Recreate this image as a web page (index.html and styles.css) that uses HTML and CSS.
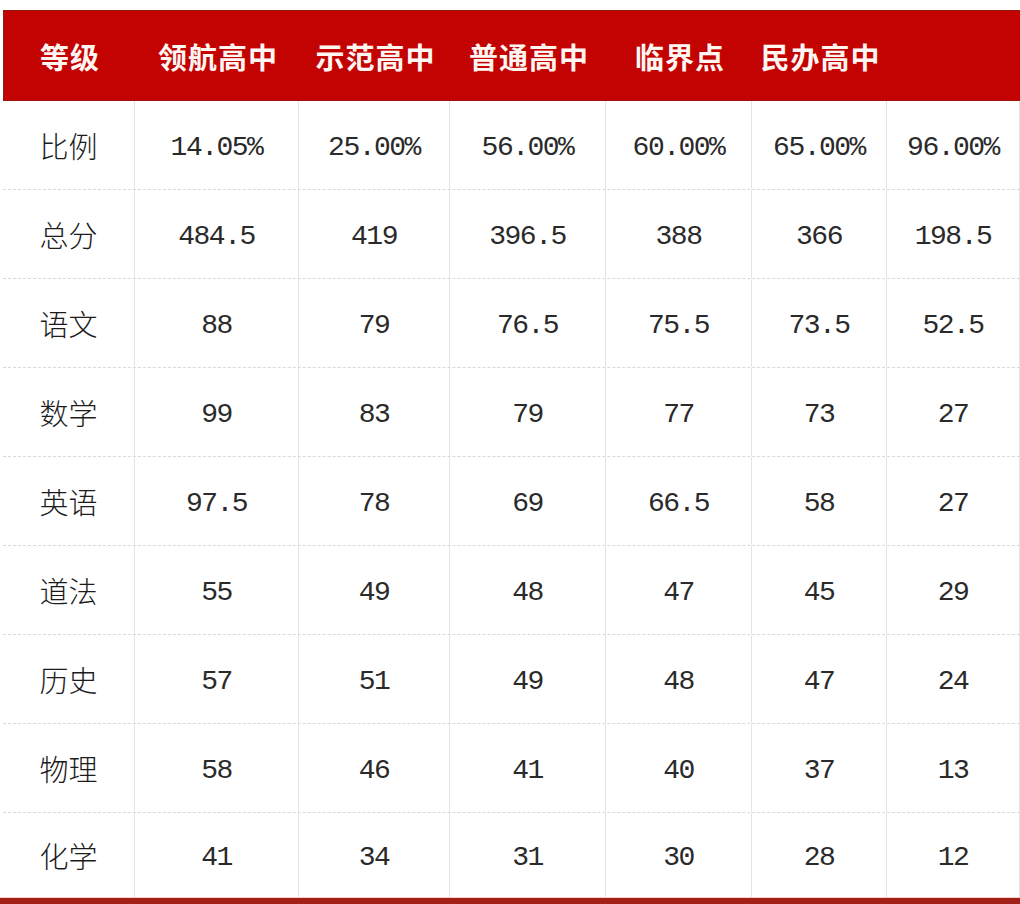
FILE: index.html
```html
<!DOCTYPE html>
<html lang="zh-CN">
<head>
<meta charset="utf-8">
<title>等级分数线</title>
<link rel="stylesheet" href="styles.css">
</head>
<body>
<div class="sheet">
  <div class="head">
    <div class="hcell">等级</div>
    <div class="hcell">领航高中</div>
    <div class="hcell">示范高中</div>
    <div class="hcell">普通高中</div>
    <div class="hcell">临界点</div>
    <div class="hcell">民办高中</div>
    <div class="hcell"></div>
  </div>
  <div class="row first">
    <div class="cell label">比例</div>
    <div class="cell num">14.05%</div>
    <div class="cell num">25.00%</div>
    <div class="cell num">56.00%</div>
    <div class="cell num">60.00%</div>
    <div class="cell num">65.00%</div>
    <div class="cell num">96.00%</div>
  </div>
  <div class="row">
    <div class="cell label">总分</div>
    <div class="cell num">484.5</div>
    <div class="cell num">419</div>
    <div class="cell num">396.5</div>
    <div class="cell num">388</div>
    <div class="cell num">366</div>
    <div class="cell num">198.5</div>
  </div>
  <div class="row">
    <div class="cell label">语文</div>
    <div class="cell num">88</div>
    <div class="cell num">79</div>
    <div class="cell num">76.5</div>
    <div class="cell num">75.5</div>
    <div class="cell num">73.5</div>
    <div class="cell num">52.5</div>
  </div>
  <div class="row">
    <div class="cell label">数学</div>
    <div class="cell num">99</div>
    <div class="cell num">83</div>
    <div class="cell num">79</div>
    <div class="cell num">77</div>
    <div class="cell num">73</div>
    <div class="cell num">27</div>
  </div>
  <div class="row">
    <div class="cell label">英语</div>
    <div class="cell num">97.5</div>
    <div class="cell num">78</div>
    <div class="cell num">69</div>
    <div class="cell num">66.5</div>
    <div class="cell num">58</div>
    <div class="cell num">27</div>
  </div>
  <div class="row">
    <div class="cell label">道法</div>
    <div class="cell num">55</div>
    <div class="cell num">49</div>
    <div class="cell num">48</div>
    <div class="cell num">47</div>
    <div class="cell num">45</div>
    <div class="cell num">29</div>
  </div>
  <div class="row">
    <div class="cell label">历史</div>
    <div class="cell num">57</div>
    <div class="cell num">51</div>
    <div class="cell num">49</div>
    <div class="cell num">48</div>
    <div class="cell num">47</div>
    <div class="cell num">24</div>
  </div>
  <div class="row">
    <div class="cell label">物理</div>
    <div class="cell num">58</div>
    <div class="cell num">46</div>
    <div class="cell num">41</div>
    <div class="cell num">40</div>
    <div class="cell num">37</div>
    <div class="cell num">13</div>
  </div>
  <div class="row last">
    <div class="cell label">化学</div>
    <div class="cell num">41</div>
    <div class="cell num">34</div>
    <div class="cell num">31</div>
    <div class="cell num">30</div>
    <div class="cell num">28</div>
    <div class="cell num">12</div>
  </div>
  <div class="foot"></div>
</div>
</body>
</html>
```
FILE: styles.css
```css
html, body {
  margin: 0;
  padding: 0;
  background: #ffffff;
}

body {
  padding-top: 10px;
  font-family: "Noto Sans CJK SC", "Liberation Sans", sans-serif;
  color: #1c1c1c;
  overflow: hidden;
}

.sheet {
  margin-left: 3px;
  width: 1017px;
}

.head,
.row {
  display: grid;
  grid-template-columns: 132px 164px 151px 156px 146px 135px 133px;
}

.head {
  box-sizing: border-box;
  height: 91px;
  background: #c30202;
  border-top: 1px solid #8e1a12;
  border-left: 1px solid #8e1a12;
  border-bottom: 1px solid #a3130d;
}

.hcell {
  display: flex;
  align-items: center;
  justify-content: center;
  color: #fff6f2;
  font-size: 29px;
  font-weight: 700;
  letter-spacing: 1px;
}

.row {
  box-sizing: border-box;
  height: 89px;
  border-top: 1px dashed #d8d8d8;
}

.row.first {
  height: 88px;
  border-top: none;
}

.row.last {
  height: 85px;
}

.cell {
  display: flex;
  align-items: center;
  justify-content: center;
  border-right: 1px solid #e4e4e4;
}

.label {
  font-size: 29px;
  font-weight: 300;
}

.num {
  padding-top: 5px;
  font-family: "Liberation Mono", "DejaVu Sans Mono", monospace;
  font-size: 28px;
  letter-spacing: -1.5px;
  color: #2a2a2a;
}

.foot {
  height: 8px;
  margin-left: -3px;
  width: 1020px;
  background: #a32018;
  border-top: 1px solid #f3cfc8;
}
```
